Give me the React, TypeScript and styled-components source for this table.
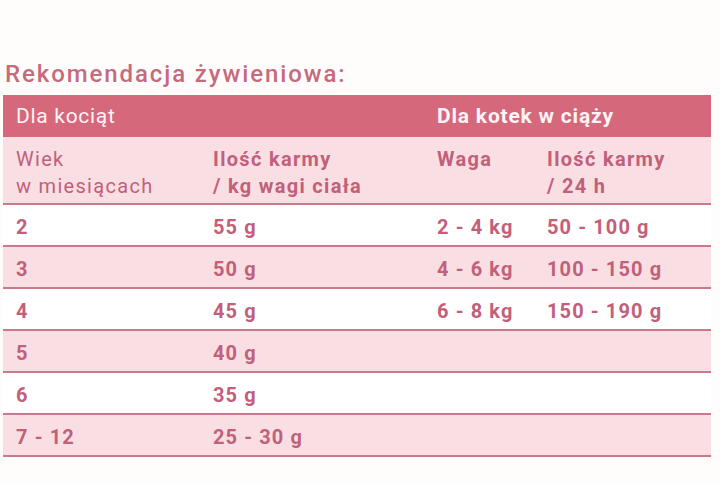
import styled, { createGlobalStyle } from "styled-components";

const GlobalStyle = createGlobalStyle`
  body {
    margin: 0;
    background: #fffdfb;
    font-family: Roboto, "Liberation Sans", sans-serif;
  }
`;

const Page = styled.div`
  width: 720px;
  height: 484px;
  padding: 60px 9px 0 3px;
  box-sizing: border-box;
`;

const Title = styled.h2`
  margin: 0 0 7px 2px;
  font-size: 24px;
  font-weight: 500;
  letter-spacing: 1.9px;
  color: #c76a7e;
  line-height: 28px;
`;

const Table = styled.div`
  display: grid;
  grid-template-columns: 197px 224px 110px 1fr;
  width: 708px;
  color: #c2607a;
`;

const HeadCell = styled.div<{ $bold?: boolean }>`
  grid-column: span 2;
  background: #d5687b;
  color: #fff3f5;
  height: 42px;
  display: flex;
  align-items: center;
  padding-left: 13px;
  font-size: 21px;
  letter-spacing: ${(p) => (p.$bold ? "0.8px" : "0.7px")};
  font-weight: ${(p) => (p.$bold ? 700 : 400)};
`;

const SubCell = styled.div<{ $bold?: boolean }>`
  background: #f9dfe4;
  height: 68px;
  padding: 9px 0 0 13px;
  box-sizing: border-box;
  font-size: 20px;
  line-height: 27px;
  letter-spacing: 1.3px;
  font-weight: ${(p) => (p.$bold ? 700 : 400)};
  border-bottom: 2px solid #c9798a;
`;

const Cell = styled.div<{ $pink?: boolean }>`
  background: ${(p) => (p.$pink ? "#f9dfe4" : "#ffffff")};
  height: 42px;
  box-sizing: border-box;
  border-bottom: 2px solid #c9798a;
  display: flex;
  align-items: center;
  padding: 3px 0 0 13px;
  font-size: 20px;
  font-weight: 700;
  letter-spacing: 1.1px;
`;

const kittens = [
  ["2", "55 g"],
  ["3", "50 g"],
  ["4", "45 g"],
  ["5", "40 g"],
  ["6", "35 g"],
  ["7 - 12", "25 - 30 g"],
];

const pregnant = [
  ["2 - 4 kg", "50 - 100 g"],
  ["4 - 6 kg", "100 - 150 g"],
  ["6 - 8 kg", "150 - 190 g"],
];

export default function App() {
  return (
    <>
      <GlobalStyle />
      <Page>
        <Title>Rekomendacja żywieniowa:</Title>
        <Table>
          <HeadCell>Dla kociąt</HeadCell>
          <HeadCell $bold>Dla kotek w ciąży</HeadCell>
          <SubCell>
            Wiek
            <br />w miesiącach
          </SubCell>
          <SubCell $bold>
            Ilość karmy
            <br />/ kg wagi ciała
          </SubCell>
          <SubCell $bold>Waga</SubCell>
          <SubCell $bold>
            Ilość karmy
            <br />/ 24 h
          </SubCell>
          {kittens.map(([age, amount], i) => {
            const pink = i % 2 === 1;
            const extra = pregnant[i] ?? ["", ""];
            return [
              <Cell key={`a${i}`} $pink={pink}>{age}</Cell>,
              <Cell key={`b${i}`} $pink={pink}>{amount}</Cell>,
              <Cell key={`c${i}`} $pink={pink}>{extra[0]}</Cell>,
              <Cell key={`d${i}`} $pink={pink}>{extra[1]}</Cell>,
            ];
          })}
        </Table>
      </Page>
    </>
  );
}
